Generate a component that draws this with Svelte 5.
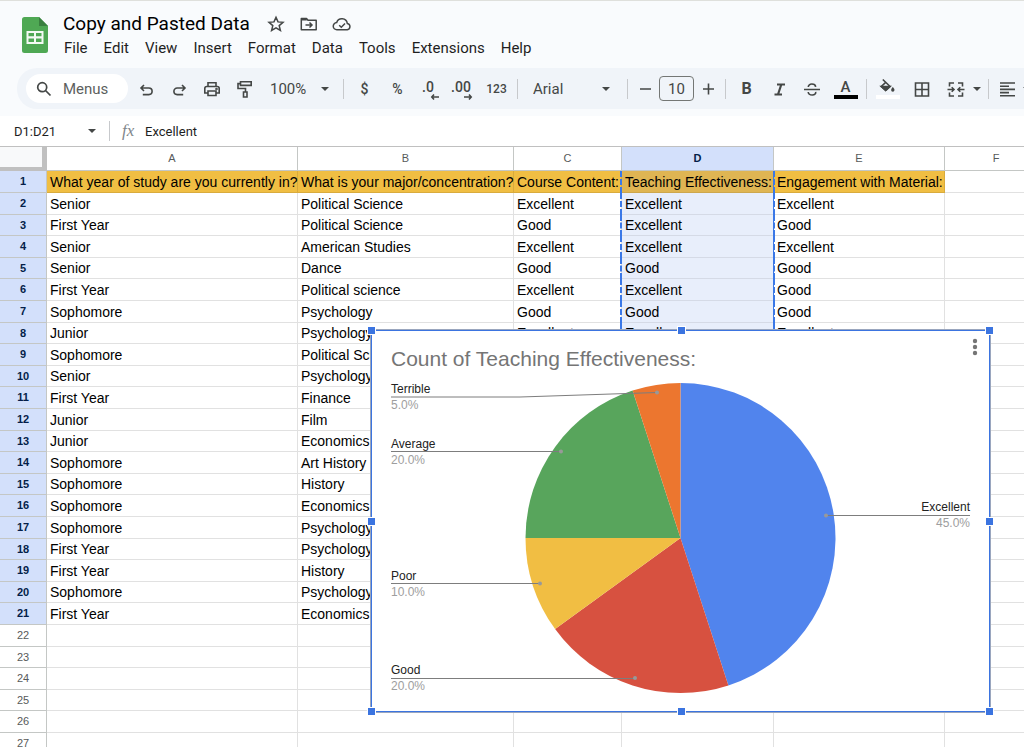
<script lang="ts">
  interface Slice {
    name: string;
    share: number;
    color: string;
    line: string;
    dot: [number, number];
    labelX: number;
    labelY: number;
    end?: boolean;
  }

  const menus = ["File", "Edit", "View", "Insert", "Format", "Data", "Tools", "Extensions", "Help"];
  const columns = ["A", "B", "C", "D", "E", "F", "G"];

  const sheet: string[][] = [
    [
      "What year of study are you currently in?",
      "What is your major/concentration?",
      "Course Content:",
      "Teaching Effectiveness:",
      "Engagement with Material:",
    ],
    ["Senior", "Political Science", "Excellent", "Excellent", "Excellent"],
    ["First Year", "Political Science", "Good", "Excellent", "Good"],
    ["Senior", "American Studies", "Excellent", "Excellent", "Excellent"],
    ["Senior", "Dance", "Good", "Good", "Good"],
    ["First Year", "Political science", "Excellent", "Excellent", "Good"],
    ["Sophomore", "Psychology", "Good", "Good", "Good"],
    ["Junior", "Psychology", "Excellent", "Excellent", "Excellent"],
    ["Sophomore", "Political Science"],
    ["Senior", "Psychology"],
    ["First Year", "Finance"],
    ["Junior", "Film"],
    ["Junior", "Economics"],
    ["Sophomore", "Art History"],
    ["Sophomore", "History"],
    ["Sophomore", "Economics"],
    ["Sophomore", "Psychology"],
    ["First Year", "Psychology"],
    ["First Year", "History"],
    ["Sophomore", "Psychology"],
    ["First Year", "Economics"],
  ];

  const rows = Array.from({ length: 27 }, (_, i) => sheet[i] ?? []);

  const slices: Slice[] = [
    { name: "Excellent", share: 45, color: "#5184ed", line: "454,184.5 598,184.5", dot: [454, 184.5], labelX: 598, labelY: 180, end: true },
    { name: "Good", share: 20, color: "#d75140", line: "19,347.5 263,347.5", dot: [263, 347], labelX: 19, labelY: 343 },
    { name: "Poor", share: 10, color: "#f1be43", line: "19,252.5 168,252.5", dot: [168, 252.5], labelX: 19, labelY: 249 },
    { name: "Average", share: 20, color: "#58a55c", line: "19,120.5 189,120.5", dot: [189, 120.5], labelX: 19, labelY: 117 },
    { name: "Terrible", share: 5, color: "#ec762f", line: "19,66 148,66 285,61.5", dot: [285, 61.5], labelX: 19, labelY: 62 },
  ];

  // pie geometry
  const cx = 308.5;
  const cy = 207;
  const r = 155;

  function point(percent: number) {
    const a = (percent / 100) * Math.PI * 2;
    return `${(cx + r * Math.sin(a)).toFixed(2)} ${(cy - r * Math.cos(a)).toFixed(2)}`;
  }

  function wedge(index: number) {
    const start = slices.slice(0, index).reduce((sum, s) => sum + s.share, 0);
    const end = start + slices[index].share;
    return `M${cx} ${cy} L${point(start)} A${r} ${r} 0 0 1 ${point(end)} Z`;
  }
</script>

{#snippet caret()}
  <svg class="caret" viewBox="0 0 8 4" width="8" height="4" aria-hidden="true">
    <path d="M0 0h8L4 4z" fill="currentColor" />
  </svg>
{/snippet}

<div class="app">
  <header class="top">
    <svg class="logo" viewBox="0 0 26 36" width="26" height="36" aria-hidden="true">
      <path d="M2.500 0H17L26 9V33.500a2.500 2.500 0 0 1-2.500 2.500H2.500A2.500 2.500 0 0 1 0 33.500V2.500A2.500 2.500 0 0 1 2.500 0z" fill="#4fa854" />
      <path d="M17 0l9 9h-9z" fill="#3a8040" />
      <path d="M4.500 14h17v13h-17zM6.500 16v3.200h5.500V16zM14 16v3.200h5.500V16zM6.500 21.500v3.500h5.500v-3.500zM14 21.500v3.500h5.500v-3.500z" fill="#f4faf4" fill-rule="evenodd" />
    </svg>
    <div class="heading">
      <div class="title-row">
        <h1>Copy and Pasted Data</h1>
        <button aria-label="Star">
          <svg viewBox="0 0 20 20" width="20" height="20">
            <path d="M10 3.300l2 4.600 5 .4-3.800 3.300 1.200 4.900-4.400-2.600-4.400 2.600 1.200-4.900L3 8.300l5-.4z" fill="none" stroke="currentColor" stroke-width="1.500" />
          </svg>
        </button>
        <button aria-label="Move">
          <svg viewBox="0 0 20 20" width="20" height="20" fill="none" stroke="currentColor" stroke-width="1.500">
            <path d="M2.300 4.500h5.200l1.500 1.800h8.200v9.400H2.300z" stroke-linejoin="round" />
            <path d="M2.300 5.500h5.500" stroke-width="2" />
            <path d="M6.500 11h6.200M10.500 8.500l2.500 2.500-2.500 2.500" />
          </svg>
        </button>
        <button aria-label="See document status">
          <svg viewBox="0 0 20 20" width="20" height="20" fill="none" stroke="currentColor" stroke-width="1.500">
            <path d="M5 15.700a3.600 3.600 0 0 1-.3-7.200A5.500 5.500 0 0 1 15.300 9.400a3.200 3.200 0 0 1 0 6.300z" />
            <path d="M7.200 11.300l2.100 2 3.700-3.800" />
          </svg>
        </button>
      </div>
      <nav>
        {#each menus as menu}
          <button>{menu}</button>
        {/each}
      </nav>
    </div>
  </header>

  <div class="toolbar" role="toolbar" aria-label="Main">
    <label class="search">
      <svg viewBox="0 0 16 16" width="16" height="16" fill="none" stroke="#444746" stroke-width="1.700" aria-hidden="true">
        <circle cx="6.200" cy="6.200" r="4.500" />
        <path d="M9.500 9.500l5 5" />
      </svg>
      <input type="text" placeholder="Menus" aria-label="Search the menus" />
    </label>
    <button class="tool" aria-label="Undo">
      <svg viewBox="0 0 18 18" width="18" height="18">
        <path d="M6 5L3 8l3 3M3 8h7.800a3.300 3.300 0 0 1 0 6.600H4.800" />
      </svg>
    </button>
    <button class="tool" aria-label="Redo">
      <svg viewBox="0 0 18 18" width="18" height="18">
        <path d="M11 5l3 3-3 3M14 8H6.200a3.300 3.300 0 0 0 0 6.600h6" />
      </svg>
    </button>
    <button class="tool" aria-label="Print">
      <svg viewBox="0 0 18 18" width="18" height="18">
        <path d="M4 6.500V2.800h8v3.700M4 13H.8V8.500q0-2 2-2h10.400q2 0 2 2V13H12M4 11h8v4.500H4z" />
        <circle cx="12.500" cy="9" r=".5" />
      </svg>
    </button>
    <button class="tool" aria-label="Paint format">
      <svg viewBox="0 0 18 18" width="18" height="18">
        <path d="M3.500 1.800h10.700v3.600H3.500zM3.500 3.600H1v4.900h7.500v3M6.500 12h3.500v5H6.500z" />
      </svg>
    </button>
    <div class="pick zoom">
      <select aria-label="Zoom"><option>100%</option></select>
      {@render caret()}
    </div>
    <i class="divider"></i>
    <button class="tool text" aria-label="Format as currency">$</button>
    <button class="tool text" aria-label="Format as percent">%</button>
    <button class="tool decimal" aria-label="Decrease decimal places">
      <span>.0</span>
      <svg viewBox="0 0 8 6" width="8" height="6"><path d="M3 .5L.8 3 3 5.500M.8 3H8" /></svg>
    </button>
    <button class="tool decimal" aria-label="Increase decimal places">
      <span>.00</span>
      <svg viewBox="0 0 8 6" width="8" height="6"><path d="M5 .5L7.200 3 5 5.500M7.200 3H0" /></svg>
    </button>
    <button class="tool number" aria-label="More formats">123</button>
    <i class="divider"></i>
    <div class="pick font">
      <select aria-label="Font"><option>Arial</option></select>
      {@render caret()}
    </div>
    <i class="divider"></i>
    <button class="step" aria-label="Decrease font size">
      <svg viewBox="0 0 12 12" width="12" height="12"><path d="M0 6h11" /></svg>
    </button>
    <input class="size" type="text" value="10" aria-label="Font size" />
    <button class="step" aria-label="Increase font size">
      <svg viewBox="0 0 12 12" width="12" height="12"><path d="M1 6h11M6.500 .5v11" /></svg>
    </button>
    <i class="divider"></i>
    <button class="tool bold" aria-label="Bold">B</button>
    <button class="tool" aria-label="Italic">
      <svg viewBox="0 0 18 18" width="18" height="18"><path d="M6 4.500h8M3.500 14.500h7.500M10.300 4.500L7 14.500" stroke-width="2.200" /></svg>
    </button>
    <button class="tool" aria-label="Strikethrough">
      <svg viewBox="0 0 18 18" width="18" height="18">
        <path d="M0 9.500h16M11.700 6.800C11.200 3.100 4.200 3.100 4.300 7M4.200 12c.5 4.200 8.300 4 7.500-.2" />
      </svg>
    </button>
    <button class="tool ink" aria-label="Text color"><span>A</span></button>
    <i class="divider"></i>
    <button class="tool fill" aria-label="Fill color">
      <svg viewBox="0 0 18 16" width="18" height="16">
        <path d="M3.800 .5L11 7.500 6.700 11.500 2.300 7.500 6.700 3.300" />
        <path d="M2.300 7.500H11L6.700 11.500z" class="solid" />
        <path d="M13.800 8s1.700 1.900 1.700 3a1.700 1.700 0 0 1-3.400 0c0-1.100 1.700-3 1.700-3z" class="solid thin" />
      </svg>
    </button>
    <button class="tool" aria-label="Borders">
      <svg viewBox="0 0 18 18" width="18" height="18"><path d="M3.500 3h13v13h-13zM10 3v13M3.500 9.500h13" /></svg>
    </button>
    <button class="tool" aria-label="Merge cells">
      <svg viewBox="0 0 18 18" width="18" height="18">
        <path d="M9 3H4.500v3.500M13 3h4.500v3.500M9 16H4.500v-3.500M13 16h4.500v-3.500M2.500 9.500h6M6.700 7.200L9 9.500l-2.300 2.300M19.500 9.500h-6M15.300 7.200L13 9.500l2.300 2.300" />
      </svg>
    </button>
    <button class="drop" aria-label="Select merge type">{@render caret()}</button>
    <i class="divider"></i>
    <button class="step" aria-label="Horizontal align">
      <svg viewBox="0 0 16 18" width="16" height="18"><path d="M1 3h15M1 6.200h9M1 9.400h15M1 12.600h9M1 15.800h15" /></svg>
    </button>
    <button class="drop" aria-label="Align options">{@render caret()}</button>
  </div>

  <div class="formula">
    <label class="name-box">
      <input type="text" value="D1:D21" aria-label="Name box" />
      {@render caret()}
    </label>
    <i class="divider"></i>
    <label class="fx" for="formula-input">fx</label>
    <input id="formula-input" class="formula-input" type="text" value="Excellent" />
  </div>

  <main>
    <table>
      <colgroup>
        <col class="col-head" />
        {#each columns as column}
          <col class="col-{column.toLowerCase()}" />
        {/each}
      </colgroup>
      <thead>
        <tr>
          <td class="corner"></td>
          {#each columns as column}
            <th scope="col" class:active={column === "D"}>{column}</th>
          {/each}
        </tr>
      </thead>
      <tbody>
        {#each rows as row, i}
          <tr>
            <th scope="row" class:active={i < 21}>{i + 1}</th>
            {#each columns as column, c}
              <td
                class:filled={i === 0 && c < 5}
                class:selected={column === "D" && i < 21}>{row[c] ?? ""}</td
              >
            {/each}
          </tr>
        {/each}
      </tbody>
    </table>

    <section class="chart" aria-label="Chart">
      <svg viewBox="0 0 617 381" width="617" height="381" role="img" aria-label="Pie chart">
        <text class="chart-title" x="19" y="35">Count of Teaching Effectiveness:</text>
        {#each slices as slice, i}
          <path d={wedge(i)} fill={slice.color} />
        {/each}
        {#each slices as slice}
          <polyline points={slice.line} />
          <circle cx={slice.dot[0]} cy={slice.dot[1]} r="2" />
          <text class="name" class:end={slice.end} x={slice.labelX} y={slice.labelY}>{slice.name}</text>
          <text class="share" class:end={slice.end} x={slice.labelX} y={slice.labelY + 16}>{slice.share}.0%</text>
        {/each}
      </svg>
      <button class="more" aria-label="Chart options">
        <svg viewBox="0 0 6 18" width="6" height="18">
          <circle cx="3" cy="3" r="2.200" />
          <circle cx="3" cy="9" r="2.200" />
          <circle cx="3" cy="15" r="2.200" />
        </svg>
      </button>
      {#each ["nw", "n", "ne", "w", "e", "sw", "s", "se"] as side}
        <span class="handle {side}"></span>
      {/each}
    </section>
  </main>
</div>

<style>
  :global(body) {
    margin: 0;
    background: #fff;
  }

  .app {
    display: flex;
    flex-direction: column;
    height: 100vh;
    overflow: hidden;
    box-sizing: border-box;
    border-top: 1px solid #dfe0dc;
    background: #f9fbfd;
    color: #1f1f1f;
    font-family: Roboto, "Liberation Sans", sans-serif;
  }

  .app * {
    box-sizing: border-box;
  }

  button,
  input,
  select {
    margin: 0;
    padding: 0;
    border: 0;
    background: none;
    color: inherit;
    font: inherit;
    outline: none;
  }

  svg {
    display: block;
    flex-shrink: 0;
  }

  /* Header */
  .top {
    display: flex;
    gap: 15px;
    height: 67px;
    padding: 11px 0 0 22px;
    flex-shrink: 0;
  }

  .logo {
    margin-top: 5px;
  }

  .title-row {
    display: flex;
    align-items: center;
    height: 24px;
  }

  h1 {
    margin: 0 16px 0 0;
    font-size: 19px;
    line-height: 24px;
    font-weight: 400;
    color: #000;
    white-space: nowrap;
  }

  .title-row button {
    margin-right: 13px;
    color: #444746;
  }

  nav {
    display: flex;
    gap: 16px;
    height: 24px;
    margin-left: 1px;
    font-size: 15px;
  }

  /* Toolbar */
  .toolbar {
    display: flex;
    align-items: center;
    height: 41px;
    margin-left: 17px;
    padding-left: 9px;
    flex-shrink: 0;
    overflow: hidden;
    border-radius: 20px 0 0 20px;
    background: #f0f4f9;
    color: #444746;
    font-size: 15px;
  }

  .toolbar > * {
    flex-shrink: 0;
  }

  .search {
    display: flex;
    align-items: center;
    gap: 11px;
    width: 102px;
    height: 29px;
    margin-right: 2px;
    padding-left: 10px;
    border-radius: 15px;
    background: #fff;
  }

  .search input {
    width: 60px;
  }

  .search input::placeholder {
    color: #5c5f5e;
    opacity: 1;
  }

  .tool,
  .step,
  .drop {
    display: flex;
    align-items: center;
    justify-content: center;
    width: 33px;
    height: 30px;
  }

  .tool svg,
  .step svg {
    overflow: visible;
    fill: none;
    stroke: currentColor;
    stroke-width: 1.6px;
  }

  .step {
    width: 27px;
  }

  .drop {
    width: 14px;
  }

  .drop .caret {
    overflow: visible;
    stroke: none;
  }

  .text {
    font-size: 14px;
    font-weight: 500;
  }

  .number {
    font-size: 12px;
    font-weight: 500;
  }

  .decimal {
    position: relative;
    padding: 0 5px 4px 0;
    font-size: 14px;
    font-weight: 500;
  }

  .decimal svg {
    position: absolute;
    right: 8px;
    bottom: 4px;
  }

  .bold {
    font-size: 16px;
    font-weight: 700;
  }

  .ink,
  .fill {
    flex-direction: column;
    font-size: 15px;
    line-height: 16px;
    font-weight: 500;
  }

  .ink::after,
  .fill::after {
    content: "";
    width: 24px;
    height: 4px;
    background: #000;
  }

  .fill::after {
    background: #fff;
  }

  .tool .solid {
    fill: currentColor;
  }

  .tool .thin {
    stroke: none;
  }

  .divider {
    width: 1px;
    height: 20px;
    margin: 0 4px;
    background: #c7c9cc;
  }

  .pick {
    display: flex;
    align-items: center;
    position: relative;
    width: 77px;
  }

  .pick select {
    width: 100%;
    height: 30px;
    padding-left: 8px;
    appearance: none;
  }

  .pick .caret {
    position: absolute;
    right: 10px;
    pointer-events: none;
  }

  .font {
    width: 101px;
  }

  .font select {
    padding-left: 11px;
  }

  .font .caret {
    right: 13px;
  }

  .size {
    width: 35px;
    height: 25px;
    border: 1px solid #747775;
    border-radius: 4px;
    text-align: center;
  }

  /* Formula bar */
  .formula {
    display: flex;
    align-items: center;
    height: 31px;
    margin-top: 7px;
    flex-shrink: 0;
    background: #fff;
    border-bottom: 1px solid #c0c0c0;
    font-size: 13px;
  }

  .name-box {
    display: flex;
    align-items: center;
    width: 105px;
    padding: 0 9px 0 14px;
    color: #444746;
  }

  .name-box input {
    flex: 1;
    min-width: 0;
    color: #1f1f1f;
  }

  .fx {
    width: 27px;
    padding-left: 8px;
    color: #80868b;
    font-family: "Liberation Serif", serif;
    font-size: 17px;
    font-style: italic;
  }

  .formula-input {
    flex: 1;
    min-width: 0;
    margin-left: 4px;
  }

  /* Grid */
  main {
    position: relative;
    flex: 1;
    min-height: 0;
    overflow: hidden;
    background: #fff;
    font-family: "Liberation Sans", Arial, sans-serif;
  }

  table {
    width: 100%;
    border-collapse: separate;
    border-spacing: 0;
    table-layout: fixed;
  }

  .col-head {
    width: 47px;
  }
  .col-a {
    width: 251px;
  }
  .col-b {
    width: 216px;
  }
  .col-c {
    width: 108px;
  }
  .col-d {
    width: 152px;
  }
  .col-e {
    width: 171px;
  }
  .col-f,
  .col-g {
    width: 103px;
  }

  th,
  td {
    height: 22px;
    padding: 0;
    border-right: 1px solid #e1e1e1;
    border-bottom: 1px solid #e1e1e1;
    line-height: 20px;
    white-space: nowrap;
  }

  /* a 21px row now and then keeps the average pitch */
  tbody tr:nth-child(5n + 3) > *,
  tbody tr:nth-child(5n) > * {
    height: 21px;
  }

  td {
    padding-left: 3px;
    color: #000;
    font-size: 14px;
  }

  th {
    padding-bottom: 1px;
    border-color: #c4c7c5;
    color: #575a5a;
    font-size: 11px;
    line-height: 18px;
    font-weight: 400;
  }

  thead th {
    height: 24px;
  }

  thead .corner {
    height: 24px;
    border-right: 5px solid #c0c0c0;
    border-bottom: 4px solid #c0c0c0;
    background: #f8f9fa;
  }

  th.active {
    background: #d3e0fb;
    color: #041e49;
    font-weight: 700;
  }

  .filled {
    background: #f0be43;
    border-color: #d9ab3c;
  }

  .selected {
    position: relative;
    background: #e8eefb;
    border-bottom-color: #d5dae6;
    border-right-color: #3b78e7;
  }

  .selected.filled {
    background: #dfb553;
    border-bottom-color: #cda74d;
  }

  /* copied range outline */
  .selected::before,
  .selected::after {
    content: "";
    position: absolute;
    top: 0;
    bottom: -1px;
    left: -2px;
    border-left: 2px dashed #3b78e7;
  }

  .selected::after {
    left: auto;
    right: -2px;
  }

  /* Chart */
  .chart {
    position: absolute;
    top: 183px;
    left: 371px;
    width: 619px;
    height: 382px;
    background: #fff;
    border: 1px solid #3b74e0;
    box-shadow: 0 0 0 1px #9aa6be;
  }

  .chart polyline {
    fill: none;
    stroke: #7d7d7d;
    stroke-width: 1px;
  }

  .chart circle {
    fill: #999;
  }

  .chart-title {
    fill: #757575;
    font-size: 21px;
  }

  .name,
  .share {
    fill: #222;
    font-size: 12px;
  }

  .share {
    fill: #9e9e9e;
  }

  .end {
    text-anchor: end;
  }

  .more {
    position: absolute;
    top: 7px;
    right: 11px;
  }

  .more circle {
    fill: #757575;
  }

  .handle {
    position: absolute;
    top: -5px;
    left: -5px;
    width: 9px;
    height: 9px;
    border: 1px solid #fff;
    background: #3b74e0;
  }

  .n,
  .s {
    left: calc(50% - 4px);
  }

  .ne,
  .e,
  .se {
    left: calc(100% - 4px);
  }

  .w,
  .e {
    top: calc(50% - 4px);
  }

  .sw,
  .s,
  .se {
    top: calc(100% - 4px);
  }
</style>
